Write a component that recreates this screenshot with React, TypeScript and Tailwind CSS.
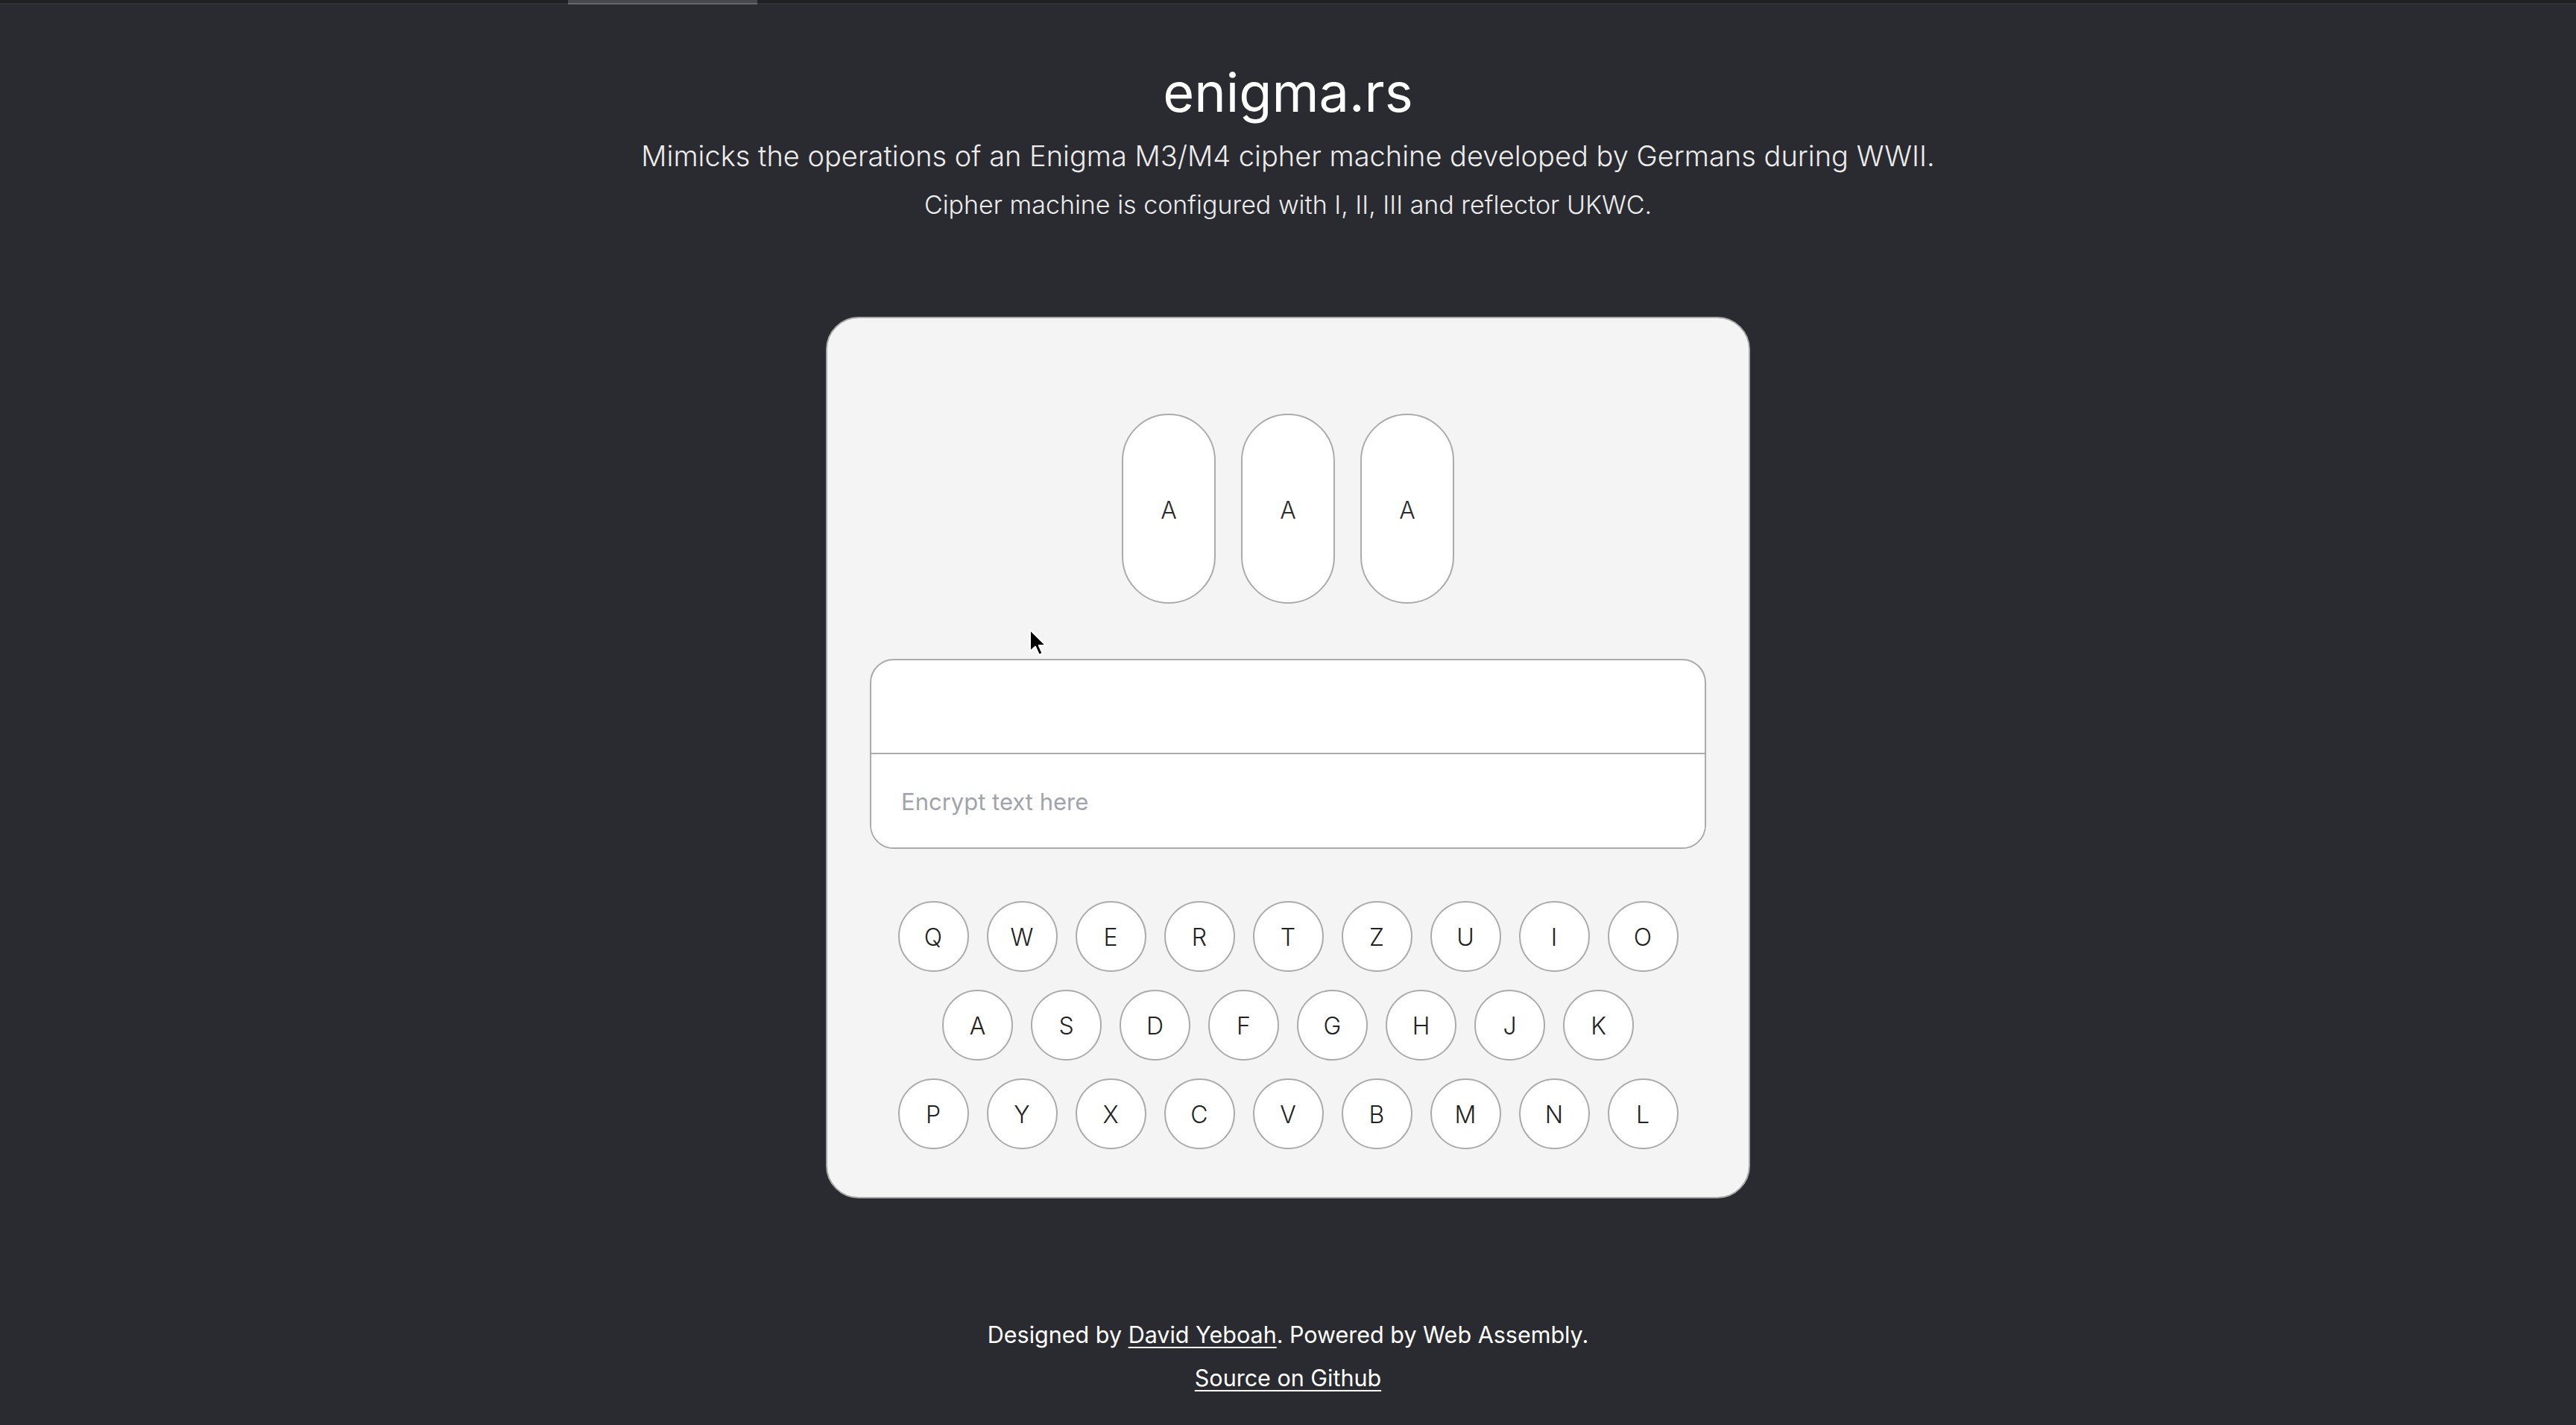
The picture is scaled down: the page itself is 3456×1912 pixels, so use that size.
const ROWS = [
  ["Q", "W", "E", "R", "T", "Z", "U", "I", "O"],
  ["A", "S", "D", "F", "G", "H", "J", "K"],
  ["P", "Y", "X", "C", "V", "B", "M", "N", "L"],
];

const ROTORS = ["A", "A", "A"];

function Key({ letter }: { letter: string }) {
  return (
    <button className="flex h-[95px] w-[95px] items-center justify-center rounded-full border-2 border-[#ababab] bg-white pt-[2px] text-[32px] font-light text-[#222]">
      {letter}
    </button>
  );
}

function Cursor() {
  return (
    <svg
      className="pointer-events-none absolute left-[1380px] top-[843px]"
      width="26"
      height="38"
      viewBox="0 0 13 19"
    >
      <path
        d="M1 1 L1 15.5 L4.5 12.3 L7 17.8 L9.3 16.8 L6.9 11.5 L11.6 11.5 Z"
        fill="#000"
        stroke="#fff"
        strokeWidth="1"
        strokeLinejoin="round"
      />
    </svg>
  );
}

export default function App() {
  return (
    <div className="relative min-h-[1912px] w-full bg-[#2a2b30] font-['Inter',sans-serif] text-white">
      {/* tab strip */}
      <div className="relative h-[6px] w-full border-b-2 border-[#303136] bg-[#1f2024]">
        <div className="absolute left-[762px] top-0 h-[6px] w-[254px] border-b-2 border-[#66676c] bg-[#47484d]" />
      </div>

      <main className="flex flex-col items-center">
        <h1 className="mt-[82px] text-[72px] font-normal leading-none">enigma.rs</h1>
        <p className="mt-[30px] text-[38px] font-light leading-none text-[#ececec]">
          Mimicks the operations of an Enigma M3/M4 cipher machine developed by Germans during WWII.
        </p>
        <p className="mt-[30px] text-[34px] font-light leading-none text-[#ececec]">
          Cipher machine is configured with I, II, III and reflector UKWC.
        </p>

        <section className="mt-[133px] flex w-[1240px] flex-col items-center rounded-[44px] border-2 border-[#a9a9a9] bg-[#f4f4f5] px-[57px] pb-[64px] pt-[128px]">
          <div className="flex gap-[34px]">
            {ROTORS.map((r, i) => (
              <div
                key={i}
                className="flex h-[255px] w-[126px] items-center justify-center rounded-full border-2 border-[#ababab] bg-white pt-[4px] text-[32px] font-light text-[#2b2b2b]"
              >
                {r}
              </div>
            ))}
          </div>

          <div className="mt-[74px] w-full overflow-hidden rounded-[32px] border-2 border-[#ababab] bg-white">
            <div className="h-[126px] border-b-2 border-[#ababab]" />
            <input
              className="block h-[125px] w-full bg-white px-[40px] pt-[2px] text-[31px] text-[#2b2b2b] outline-none placeholder:text-[#a0a4aa]"
              placeholder="Encrypt text here"
            />
          </div>

          <div className="mt-[70px] flex flex-col items-center gap-[24px]">
            {ROWS.map((row, i) => (
              <div key={i} className="flex gap-[24px]">
                {row.map((l) => (
                  <Key key={l} letter={l} />
                ))}
              </div>
            ))}
          </div>
        </section>

        <footer className="mt-[154px] flex flex-col items-center text-[30.5px] leading-[58px]">
          <p>
            Designed by{" "}
            <a href="#" className="underline decoration-2 underline-offset-[5px]">
              David Yeboah
            </a>
            . Powered by Web Assembly.
          </p>
          <a href="#" className="underline decoration-2 underline-offset-[5px]">
            Source on Github
          </a>
        </footer>
      </main>

      <Cursor />
    </div>
  );
}
